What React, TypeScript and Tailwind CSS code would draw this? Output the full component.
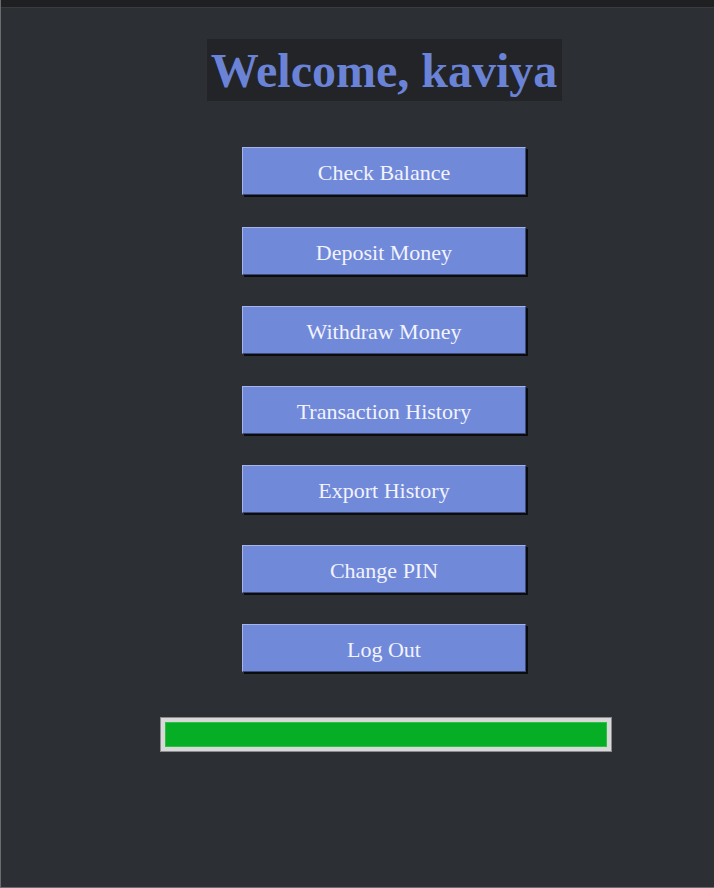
import React from 'react';

const ACTIONS = [
  'Check Balance',
  'Deposit Money',
  'Withdraw Money',
  'Transaction History',
  'Export History',
  'Change PIN',
  'Log Out',
];

export default function App() {
  return (
    <div className="w-[714px] h-[888px] bg-[#2c2f34] border-l border-b border-[#6a6c70] flex flex-col overflow-hidden" style={{ fontFamily: '"Liberation Serif", serif' }}>
      {/* noisy title strip */}
      <div className="h-[8px] w-full bg-[#1f2022] border-b border-[#3a3b3e]"></div>

      <div className="flex flex-col items-center pl-[53px] pt-[31px]">
        <h1 className="bg-[#222428] w-[355px] h-[62px] flex items-center justify-center pt-[2px] text-[48px] font-bold text-[#6a83d6] leading-none">
          Welcome, kaviya
        </h1>

        <div className="flex flex-col gap-[31.5px] mt-[46px]">
          {ACTIONS.map(label => (
            <button
              key={label}
              className="w-[284px] h-[48px] bg-[#7189d9] border border-t-[#a6b4ec] border-l-[#a6b4ec] border-r-[#3d4a78] border-b-[#3d4a78] shadow-[2px_2px_0_#0b0c0e] pt-[3px] text-[22px] text-[#f2f3ff] flex items-center justify-center"
            >
              {label}
            </button>
          ))}
        </div>

        <div className="mt-[46px] ml-[4px] w-[450px] h-[33px] border-[3px] border-[#d8d8d8] outline outline-1 outline-[#8a8b8e] p-[1px] bg-[#d8d8d8]">
          <div className="w-full h-full bg-[#05ae25] border border-[#2cc048]"></div>
        </div>
      </div>
    </div>
  );
}
